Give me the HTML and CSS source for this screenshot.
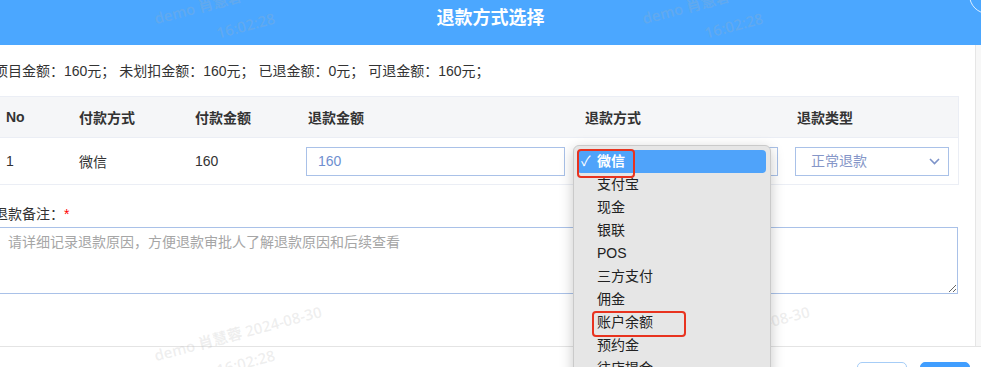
FILE: index.html
```html
<!DOCTYPE html>
<html lang="zh-CN">
<head>
  <meta charset="UTF-8">
  <title>退款方式选择</title>
  <link rel="stylesheet" href="styles.css">
</head>
<body>

  <div class="dialog">

    <!-- en-tête -->
    <div class="dialog-header">
      <span class="title">退款方式选择</span>
      <span class="close"></span>
    </div>

    <div class="dialog-main">
      <div class="content">
        <p class="summary">项目金额：160元； 未划扣金额：160元； 已退金额：0元； 可退金额：160元；</p>

        <table class="refund-table">
          <colgroup>
            <col style="width:73px">
            <col style="width:116px">
            <col style="width:113px">
            <col style="width:277px">
            <col style="width:212px">
            <col style="width:173px">
          </colgroup>
          <thead>
            <tr>
              <th>No</th>
              <th>付款方式</th>
              <th>付款金额</th>
              <th>退款金额</th>
              <th>退款方式</th>
              <th>退款类型</th>
            </tr>
          </thead>
          <tbody>
            <tr>
              <td>1</td>
              <td>微信</td>
              <td>160</td>
              <td class="cell-field"><div class="field">160</div></td>
              <td class="cell-field pay-cell">
                <div class="field select">
                  <span></span>
                  <svg width="8" height="6" viewBox="0 0 8 6"><path d="M1 1 L4 5 L7 1 Z" fill="#333"/></svg>
                </div>
              </td>
              <td class="cell-field type-cell">
                <div class="field select">
                  <span>正常退款</span>
                  <svg width="11" height="7" viewBox="0 0 11 7"><path d="M1 1 L5.5 5.5 L10 1" fill="none" stroke="#7d93c9" stroke-width="1.6"/></svg>
                </div>
              </td>
            </tr>
          </tbody>
        </table>

        <div class="remark-label">退款备注：<span class="req">*</span></div>
        <textarea class="remark" placeholder="请详细记录退款原因，方便退款审批人了解退款原因和后续查看"></textarea>
      </div>
      <div class="scrollbar"></div>
    </div>

    <div class="dialog-footer">
      <button class="btn">取消</button>
      <button class="btn primary">确定</button>
    </div>

    <!-- filigrane -->
    <div class="watermark wm-1">demo 肖慧蓉 2024-08-30<br>16:02:28</div>
    <div class="watermark wm-2">demo 肖慧蓉 2024-08-30<br>16:02:28</div>
    <div class="watermark wm-3">demo 肖慧蓉 2024-08-30<br>16:02:28</div>
    <div class="watermark wm-4">demo 肖慧蓉 2024-08-30<br>16:02:28</div>

    <!-- liste déroulante ouverte -->
    <div class="dropdown">
      <div class="option selected"><span class="check">✓</span>微信</div>
      <div class="option">支付宝</div>
      <div class="option">现金</div>
      <div class="option">银联</div>
      <div class="option">POS</div>
      <div class="option">三方支付</div>
      <div class="option">佣金</div>
      <div class="option">账户余额</div>
      <div class="option">预约金</div>
      <div class="option">往店提金</div>
      <span class="mark mark-1"></span>
      <span class="mark mark-2"></span>
    </div>

  </div>

</body>
</html>
```

FILE: styles.css
```css
html, body {
  margin: 0;
  padding: 0;
  background: white;
  overflow: hidden;
}

body {
  font-family: "Liberation Sans", "Noto Sans CJK SC", sans-serif;
  font-size: 14px;
  color: #333;
}

.dialog {
  position: relative;
  width: 981px;
  height: 367px;
  overflow: hidden;
}

.dialog-header {
  height: 45px;
  box-sizing: border-box;
  background-color: #4ba7ff;
  text-align: center;
  padding-top: 6px;
}

.dialog-header .title {
  color: white;
  font-size: 18px;
  font-weight: bold;
  line-height: 24px;
}

.close {
  position: absolute;
  left: 969px;
  top: -24px;
  width: 36px;
  height: 36px;
  border: 1px solid rgba(255, 255, 255, 0.8);
  border-radius: 50%;
}

.dialog-main {
  display: flex;
  height: 301px;
}

.content {
  flex: 1;
  margin-left: -6px;
  padding: 16px 16px 0 0;
}

.scrollbar {
  width: 6px;
  background-color: #f7f7f7;
  border-left: 1px solid #e6e6e6;
}

.summary {
  margin: 0 0 15px;
  line-height: 20px;
  white-space: pre;
}

.refund-table {
  width: 964px;
  table-layout: fixed;
  border-collapse: collapse;
  border-top: 1px solid #ebeef5;
  border-right: 1px solid #ebeef5;
}

.refund-table th {
  height: 40px;
  padding: 0 12px;
  background-color: #f5f6f8;
  text-align: left;
  font-weight: bold;
  color: #333;
  border-bottom: 1px solid #ebeef5;
}

.refund-table td {
  height: 46px;
  padding: 0 12px;
  border-bottom: 1px solid #ebeef5;
}

.refund-table td.cell-field {
  padding: 0 8px 0 10px;
}

.refund-table td.pay-cell {
  padding-right: 7px;
}

.refund-table td.type-cell {
  padding-right: 9px;
}

.field {
  height: 29px;
  box-sizing: border-box;
  border: 1px solid #a9c1e8;
  padding: 0 11px;
  line-height: 27px;
  color: #6f8fd0;
}

.field.select {
  display: flex;
  align-items: center;
  justify-content: space-between;
  padding: 0 8px 0 15px;
  color: #8596c8;
}

.remark-label {
  margin-top: 19px;
  line-height: 20px;
}

.req {
  color: #f00;
}

.remark {
  display: block;
  width: 964px;
  height: 67px;
  margin-top: 3px;
  box-sizing: border-box;
  border: 1px solid #a9c1e8;
  border-radius: 0;
  padding: 4px 13px;
  font-family: inherit;
  font-size: 14px;
  line-height: 20px;
  color: #333;
  outline: none;
}

.remark::placeholder {
  color: #a6a6a6;
}

.dialog-footer {
  display: flex;
  justify-content: flex-end;
  gap: 13px;
  padding: 15px 11px 0 0;
  border-top: 1px solid #e4e4e4;
}

.btn {
  width: 50px;
  height: 32px;
  border: 1px solid #a6cdf7;
  border-radius: 5px;
  background: white;
  font-size: 14px;
}

.btn.primary {
  background-color: #409eff;
  border-color: #409eff;
  color: white;
}

.watermark {
  position: absolute;
  width: 180px;
  text-align: center;
  font-family: "Open Sans", "Noto Sans CJK SC", sans-serif;
  font-size: 15px;
  font-weight: 600;
  line-height: 30px;
  color: rgba(180, 180, 180, 0.22);
  transform: rotate(-15deg);
  transform-origin: 0 0;
  white-space: nowrap;
  pointer-events: none;
}

.wm-1 { left: 147px; top: 5px; }
.wm-2 { left: 635px; top: 5px; }
.wm-3 { left: 147px; top: 342px; }
.wm-4 { left: 635px; top: 342px; }

.dropdown {
  position: absolute;
  left: 573px;
  top: 145px;
  width: 198px;
  height: 260px;
  box-sizing: border-box;
  padding-top: 4px;
  background-color: #e6e6e6;
  border: 1px solid #cacaca;
  border-radius: 6px;
  box-shadow: 0 4px 14px rgba(0, 0, 0, 0.22);
  font-family: "Liberation Sans", "Noto Sans CJK SC", sans-serif;
  font-size: 14px;
  color: #222;
}

.option {
  position: relative;
  height: 23px;
  line-height: 23px;
  padding-left: 23px;
}

.option.selected {
  margin: 0 4px 0 3px;
  padding-left: 20px;
  background-color: #4fa3fa;
  border-radius: 4px;
  color: white;
  font-weight: bold;
}

.check {
  position: absolute;
  left: 4px;
  top: 0;
  font-weight: normal;
}

.mark {
  position: absolute;
  border: 2px solid #e8331f;
  border-radius: 4px;
}

.mark-1 { left: 3px; top: 3px; width: 54px; height: 25px; }
.mark-2 { left: 18px; top: 165px; width: 90px; height: 22px; }
```
